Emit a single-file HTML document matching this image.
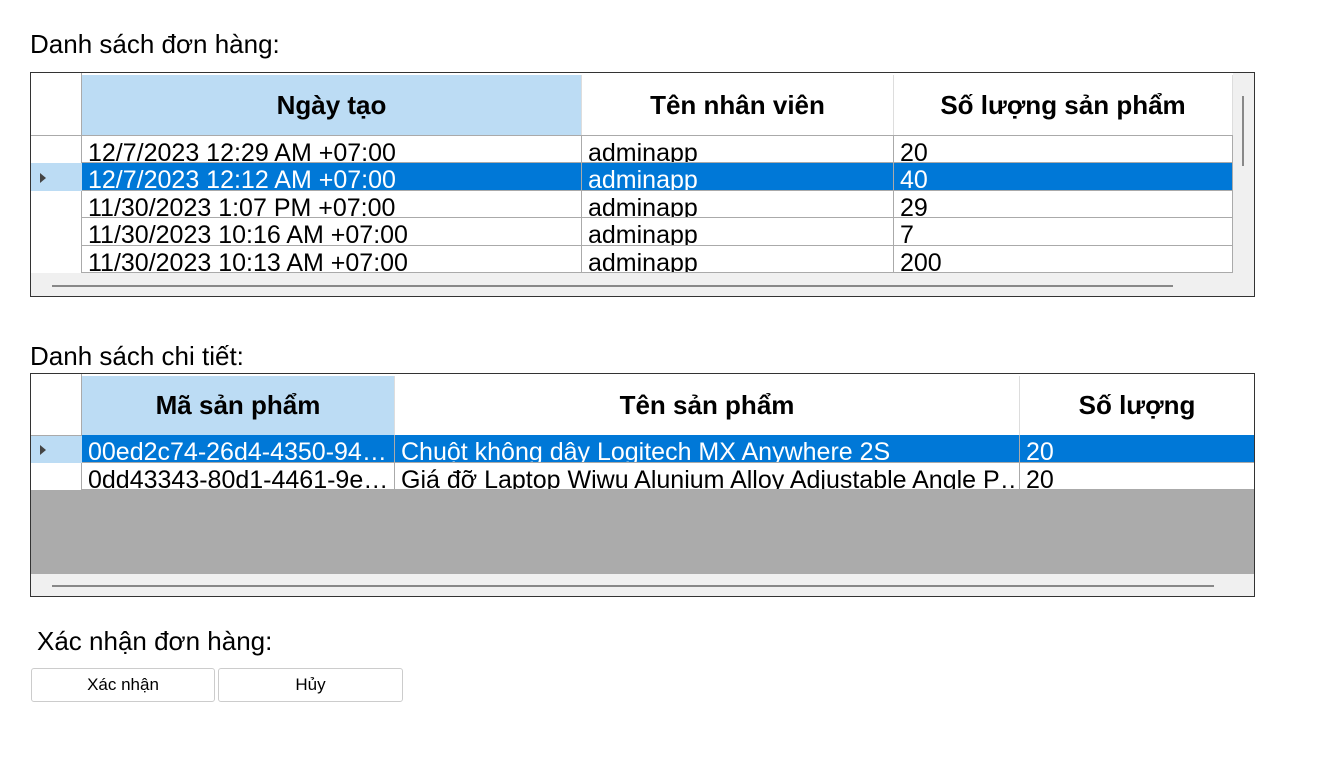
<!DOCTYPE html>
<html><head><meta charset="utf-8"><style>
body{margin:0;width:1330px;height:783px;background:#fff;font-family:"Liberation Sans",Arial,sans-serif;position:relative;overflow:hidden}
.a{position:absolute;box-sizing:border-box}
.lbl{font-size:26px;color:#000;white-space:nowrap}
.grid{border:1px solid #333;background:#fff;overflow:hidden}
.h{font-weight:bold;font-size:26px;text-align:center;line-height:60px;border-right:1px solid #ddd;white-space:nowrap}
.c{box-sizing:border-box;font-size:25px;line-height:27px;padding:4px 0 0 6px;overflow:hidden;white-space:nowrap;height:27.4px;border-right:1px solid #aaa;border-bottom:1px solid #aaa}
.sel{background:#0078d7;color:#fff}
.btn{border:1px solid #ccc;border-radius:3px;background:#fff;font-size:17px;text-align:center;line-height:32px}
.arr{width:0;height:0;border-left:6px solid #444;border-top:5px solid transparent;border-bottom:5px solid transparent}
</style></head><body>
<div class="a lbl" style="left:30px;top:29px">Danh sách đơn hàng:</div>

<div class="a grid" style="left:30px;top:72px;width:1225px;height:225px">
  <div class="a" style="left:0;top:0;width:51px;height:200px;border-right:1px solid #aaa"></div>
  <div class="a h" style="left:51px;top:2px;width:500px;height:60px;background:#bcdcf4">Ngày tạo</div>
  <div class="a h" style="left:551px;top:2px;width:312px;height:60px">Tên nhân viên</div>
  <div class="a h" style="left:863px;top:2px;width:339px;height:60px">Số lượng sản phẩm</div>
  <div class="a" style="left:0;top:62px;width:1202px;height:1px;background:#aaa"></div>
  <div class="a" style="left:0;top:90px;width:51px;height:28px;background:#bcdcf4"></div>
  <div class="a arr" style="left:9px;top:100px"></div>
  <div class="a" style="left:51px;top:63px;width:1151px">
    <div style="display:flex"><div class="c" style="width:500px">12/7/2023 12:29 AM +07:00</div><div class="c" style="width:312px">adminapp</div><div class="c" style="width:339px">20</div></div>
    <div style="display:flex" class="sel"><div class="c" style="width:500px">12/7/2023 12:12 AM +07:00</div><div class="c" style="width:312px">adminapp</div><div class="c" style="width:339px">40</div></div>
    <div style="display:flex"><div class="c" style="width:500px">11/30/2023 1:07 PM +07:00</div><div class="c" style="width:312px">adminapp</div><div class="c" style="width:339px">29</div></div>
    <div style="display:flex"><div class="c" style="width:500px">11/30/2023 10:16 AM +07:00</div><div class="c" style="width:312px">adminapp</div><div class="c" style="width:339px">7</div></div>
    <div style="display:flex"><div class="c" style="width:500px">11/30/2023 10:13 AM +07:00</div><div class="c" style="width:312px">adminapp</div><div class="c" style="width:339px">200</div></div>
  </div>
  <div class="a" style="left:0;top:200px;width:1223px;height:23px;background:#f0f0f0"></div>
  <div class="a" style="left:1202px;top:0;width:21px;height:223px;background:#f0f0f0"></div>
  <div class="a" style="left:21px;top:212px;width:1121px;height:2px;background:#888"></div>
  <div class="a" style="left:1211px;top:23px;width:2px;height:70px;background:#888"></div>
</div>

<div class="a lbl" style="left:30px;top:341px">Danh sách chi tiết:</div>

<div class="a grid" style="left:30px;top:373px;width:1225px;height:224px">
  <div class="a" style="left:0;top:0;width:51px;height:116px;border-right:1px solid #aaa"></div>
  <div class="a h" style="left:51px;top:2px;width:313px;height:59px;line-height:59px;background:#bcdcf4">Mã sản phẩm</div>
  <div class="a h" style="left:364px;top:2px;width:625px;height:59px;line-height:59px">Tên sản phẩm</div>
  <div class="a h" style="left:989px;top:2px;width:234px;height:59px;line-height:59px;border:0">Số lượng</div>
  <div class="a" style="left:0;top:61px;width:1223px;height:1px;background:#aaa"></div>
  <div class="a" style="left:0;top:62px;width:51px;height:27px;background:#bcdcf4"></div>
  <div class="a arr" style="left:9px;top:71px"></div>
  <div class="a" style="left:51px;top:61px;width:1172px">
    <div style="display:flex" class="sel"><div class="c" style="width:313px;height:28px">00ed2c74-26d4-4350-94…</div><div class="c" style="width:625px;height:28px">Chuột không dây Logitech MX Anywhere 2S</div><div class="c" style="width:234px;height:28px;border-right:0">20</div></div>
    <div style="display:flex"><div class="c" style="width:313px">0dd43343-80d1-4461-9e…</div><div class="c" style="width:625px">Giá đỡ Laptop Wiwu Alunium Alloy Adjustable Angle P…</div><div class="c" style="width:234px;border-right:0">20</div></div>
  </div>
  <div class="a" style="left:0;top:116px;width:1223px;height:84px;background:#ababab"></div>
  <div class="a" style="left:0;top:200px;width:1223px;height:22px;background:#f0f0f0"></div>
  <div class="a" style="left:21px;top:211px;width:1162px;height:2px;background:#888"></div>
</div>

<div class="a lbl" style="left:37px;top:626px">Xác nhận đơn hàng:</div>
<div class="a btn" style="left:31px;top:668px;width:184px;height:34px">Xác nhận</div>
<div class="a btn" style="left:218px;top:668px;width:185px;height:34px">Hủy</div>
</body></html>
